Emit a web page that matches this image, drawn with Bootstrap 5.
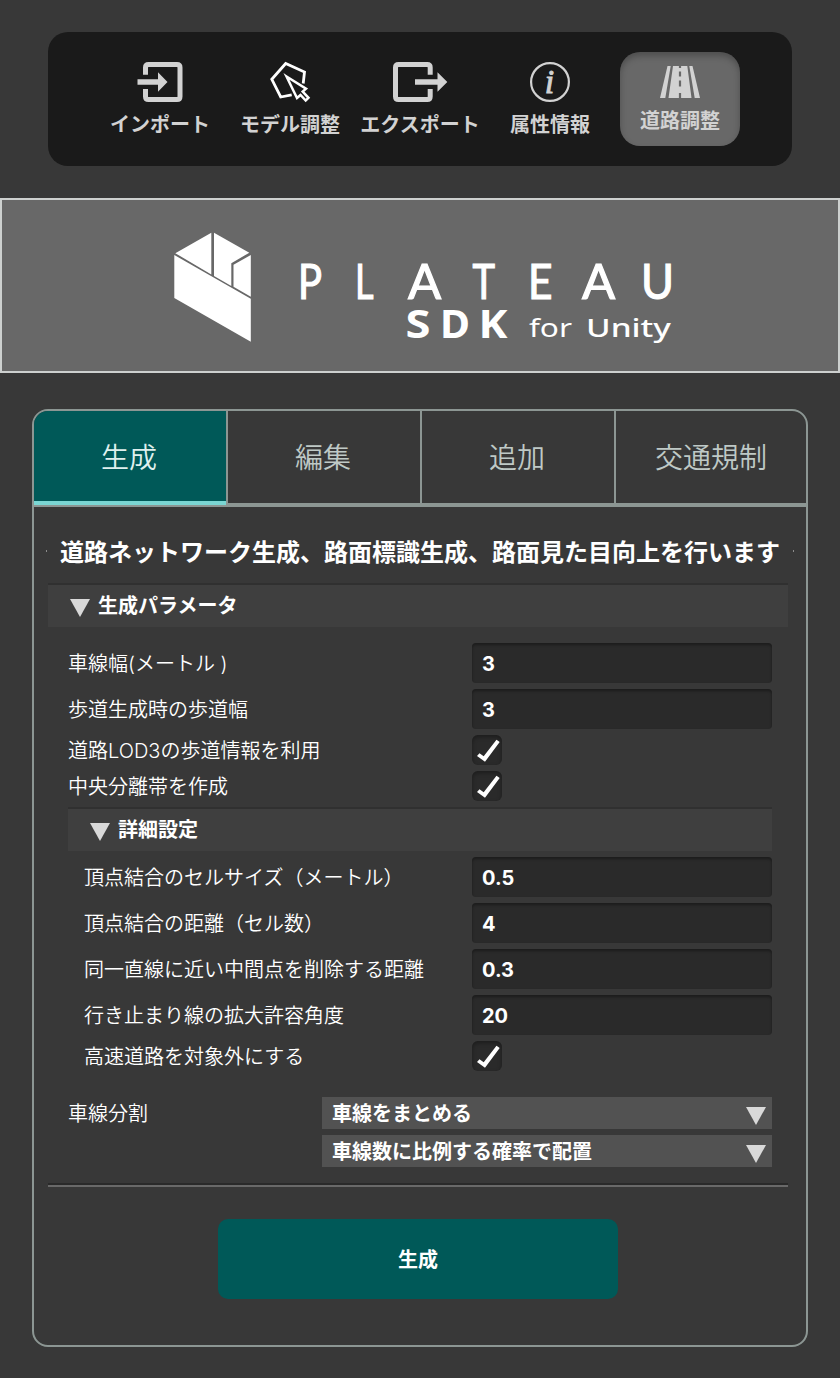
<!DOCTYPE html>
<html lang="ja">
<head>
<meta charset="utf-8">
<meta name="viewport" content="width=device-width, initial-scale=1">
<title>PLATEAU SDK for Unity</title>
<link rel="stylesheet" href="https://cdn.jsdelivr.net/npm/bootstrap@5.3.0/dist/css/bootstrap.min.css">
<style>
body{background:#383838;color:#fff;font-family:Inter,"Noto Sans CJK JP",sans-serif;font-size:20px;line-height:24px}
.jp{font-family:"Noto Sans CJK JP",sans-serif}
.toolbar{margin:32px 48px 0;height:134px;padding:20px 52px;gap:10px;background:#1a1a1a;border-radius:20px}
.tool{width:120px;height:94px;padding:10px 0 0;gap:10px;color:#d2d2d2;font-weight:700;border-radius:20px;white-space:nowrap;border:0;background:none}
.tool.active{background:#686868;box-shadow:inset 0 4px 6px rgba(0,0,0,.25);padding-top:14px}
.tool svg{display:block;overflow:visible}
.banner{margin-top:32px;height:175px;border:2px solid #cdd0cf;background:#686868}
.banner svg{display:block;margin:-2px}
.panel{margin:36px 32px 31px;height:938px;border:2px solid #8c9693;border-radius:16px;overflow:hidden}
.tabs{height:96px;border-bottom:2px solid #8c9693}
.tab{width:194px;border:0;border-right:2px solid #8c9693;border-bottom:2px solid #8c9693;background:none;color:#bfc9c6;font-size:28px;font-weight:350;padding:0 2px 3px 0}
.tab:last-child{width:190px;border-right:0;padding-right:0}
.tab.active{background:linear-gradient(#7ad6d3,#7ad6d3) 0 100%/100% 4px no-repeat #005958;border-bottom:0;color:#dff0ee;padding-bottom:5px}
.title{height:76px;padding:12px 12px 0 12px;font-size:24px;font-weight:700}
.title i{width:1px;height:2px;background:#8c8c8c}
.fold{height:44px;border-top:2px solid #303030;background:#3f3f3f;padding:0 0 0 22px;gap:8px;font-weight:700}
.fold svg{margin-top:4px}
.main-sec{margin:0 18px 0 14px}
.fields{padding:16px 16px 0 20px}
.rows{display:flex;flex-direction:column;gap:6px}
.sub{padding-left:16px}
.frow{display:flex;align-items:center;justify-content:space-between}
.cap{padding-top:2px;font-weight:350}
.split-cap{margin-top:3px}
.val{width:300px;height:40px;border:0;border-radius:4px;background:#2a2a2a;box-shadow:inset 0 2px 3px rgba(0,0,0,.35);color:#fff;font-size:20px;font-weight:700;padding:2px 10px 0}
.val:focus{background:#2a2a2a;color:#fff}
.tick{width:30px;height:30px;margin-right:270px;border-radius:6px;background:#2a2a2a;box-shadow:inset 0 2px 4px rgba(0,0,0,.35)}
.tick svg{display:block}
.pick{width:450px;height:32px;background:#525252;border:0;color:#fff;font-weight:700;padding:2px 5px 0 10px}
.pick svg{margin-top:4px}
.rule{margin:16px 18px 0 14px;height:4px;background:#696969;border-top:2px solid #2a2a2a}
.go{width:400px;height:80px;margin:32px 0 0 184px;padding:8px 0 6px;border:0;border-radius:10px;background:#005958;color:#fff;font-size:20px;font-weight:700}
.go:hover{background:#005958;color:#fff}
</style>
</head>
<body>
<svg width="0" height="0" class="position-absolute">
<symbol id="tri" viewBox="0 0 20 18"><path d="M0 0H20L10 18Z" fill="#d9d9d9"/></symbol>
<symbol id="chk" viewBox="0 0 30 30"><path d="M5 21L7.500 18.200L11.700 21.200L24.500 4.800L27.700 7L13 26.800Z" fill="#fff"/></symbol>
</svg>

<nav class="toolbar d-flex jp">
 <button class="tool d-flex flex-column align-items-center">
  <svg width="46" height="40" fill="none"><path d="M8.500 12.700V5.500Q8.500 2.500 11.500 2.500H40Q43 2.500 43 5.500V34.500Q43 37.500 40 37.500H11.500Q8.500 37.500 8.500 34.500V27" stroke="#d2d2d2" stroke-width="5"/><path d="M.5 17.300H21V10.300L30.500 20L21 29.700V22.700H.5Z" fill="#d2d2d2"/></svg>
  <span>インポート</span></button>
 <button class="tool d-flex flex-column align-items-center">
  <svg width="40" height="40" fill="none" stroke="#fff" stroke-width="2.800"><path d="M33.200 21.500L34.500 10L15.700 1.500L1.800 17.300L10.700 35L21.700 32.800"/><path d="M16.500 14.500L36 26.700L32.700 29.500L38.500 35.800L35.700 38.500L30.500 33L27 36Z" stroke-width="2.500"/></svg>
  <span>モデル調整</span></button>
 <button class="tool d-flex flex-column align-items-center">
  <svg width="54" height="40" fill="none"><path d="M37.200 12.700V5.500Q37.200 2.500 34.200 2.500H5.500Q2.500 2.500 2.500 5.500V34.500Q2.500 37.500 5.500 37.500H34.200Q37.200 37.500 37.200 34.500V27" stroke="#d2d2d2" stroke-width="5"/><path d="M22 17.300H44.500V10.300L54.300 20L44.500 29.700V22.700H22Z" fill="#d2d2d2"/></svg>
  <span>エクスポート</span></button>
 <button class="tool d-flex flex-column align-items-center">
  <svg width="40" height="40" fill="#d2d2d2"><circle cx="20" cy="20" r="18.900" fill="none" stroke="#d2d2d2" stroke-width="2.200"/><text x="19.500" y="31" text-anchor="middle" font-family="Liberation Serif,serif" font-style="italic" font-weight="400" font-size="34" stroke="#d2d2d2" stroke-width=".9">i</text></svg>
  <span>属性情報</span></button>
 <button class="tool active d-flex flex-column align-items-center">
  <svg width="40" height="32" fill="#d2d2d2"><path d="M7.500 0H10.700L5.300 32H0ZM29.300 0H32.500L40 32H34.700ZM13 0H27.300L31.500 32H8.500Z"/><path d="M20 0V2M20 5.500V10.500M20 14.500V20.500M20 27V32" stroke="#686868" stroke-width="2.200"/></svg>
  <span>道路調整</span></button>
</nav>

<header class="banner">
 <svg width="840" height="175" viewBox="0 198 840 175" fill="#fff">
  <path d="M175.300 253.200L211.300 232.700V274.500ZM214 232.700L249.300 252.700L231.300 263.300V286L214 276ZM233.500 264.700L250.800 255V296.700L233.500 286.800ZM174.300 255L250.800 298.700V341.700L174.300 298Z"/>
  <g font-family="Lato,sans-serif" font-size="49" stroke="#fff" stroke-width="1.200">
   <text y="299" x="298" textLength="24" lengthAdjust="spacingAndGlyphs">P</text>
   <text y="299" x="355" textLength="18.500" lengthAdjust="spacingAndGlyphs">L</text>
   <text y="299" x="408">A</text>
   <text y="299" x="472.500" textLength="22.500" lengthAdjust="spacingAndGlyphs">T</text>
   <text y="299" x="528" textLength="24.500" lengthAdjust="spacingAndGlyphs">E</text>
   <text y="299" x="582">A</text>
   <text y="299" x="641" textLength="33" lengthAdjust="spacingAndGlyphs">U</text>
  </g>
  <g font-family="Noto Sans,sans-serif" font-weight="700" font-size="39">
   <text y="338" x="405.500" textLength="25" lengthAdjust="spacingAndGlyphs">S</text>
   <text y="338" x="440" textLength="30" lengthAdjust="spacingAndGlyphs">D</text>
   <text y="338" x="478.500" textLength="29" lengthAdjust="spacingAndGlyphs">K</text>
  </g>
  <text font-family="Noto Sans,sans-serif" font-size="25.500" y="337" x="529" textLength="43" lengthAdjust="spacingAndGlyphs">for</text>
  <text font-family="Noto Sans,sans-serif" font-weight="500" font-size="25.500" y="337" x="586" textLength="85" lengthAdjust="spacingAndGlyphs">Unity</text>
 </svg>
</header>

<main class="panel">
 <div class="tabs d-flex jp">
  <button class="tab active">生成</button><button class="tab">編集</button><button class="tab">追加</button><button class="tab">交通規制</button>
 </div>
 <div class="title d-flex align-items-center justify-content-between jp"><i></i><span>道路ネットワーク生成、路面標識生成、路面見た目向上を行います</span><i></i></div>
 <section class="main-sec">
  <div class="fold d-flex align-items-center"><svg width="20" height="18"><use href="#tri"/></svg>生成パラメータ</div>
  <div class="fields rows">
   <label class="frow"><span class="cap">車線幅(メートル )</span><input class="form-control val" value="3"></label>
   <label class="frow"><span class="cap">歩道生成時の歩道幅</span><input class="form-control val" value="3"></label>
   <div class="frow"><span class="cap">道路LOD3の歩道情報を利用</span><span class="tick"><svg width="30" height="30"><use href="#chk"/></svg></span></div>
   <div class="frow"><span class="cap">中央分離帯を作成</span><span class="tick"><svg width="30" height="30"><use href="#chk"/></svg></span></div>
   <div class="fold d-flex align-items-center"><svg width="20" height="18"><use href="#tri"/></svg>詳細設定</div>
   <div class="sub rows">
    <label class="frow"><span class="cap">頂点結合のセルサイズ（メートル）</span><input class="form-control val" value="0.5"></label>
    <label class="frow"><span class="cap">頂点結合の距離（セル数）</span><input class="form-control val" value="4"></label>
    <label class="frow"><span class="cap">同一直線に近い中間点を削除する距離</span><input class="form-control val" value="0.3"></label>
    <label class="frow"><span class="cap">行き止まり線の拡大許容角度</span><input class="form-control val" value="20"></label>
    <div class="frow"><span class="cap">高速道路を対象外にする</span><span class="tick"><svg width="30" height="30"><use href="#chk"/></svg></span></div>
   </div>
   <div class="d-flex justify-content-between align-items-start mt-3 pt-1">
    <span class="cap split-cap">車線分割</span>
    <div class="rows">
     <button class="pick d-flex align-items-center justify-content-between">車線をまとめる<svg width="22" height="18"><use href="#tri"/></svg></button>
     <button class="pick d-flex align-items-center justify-content-between">車線数に比例する確率で配置<svg width="22" height="18"><use href="#tri"/></svg></button>
    </div>
   </div>
  </div>
 </section>
 <div class="rule"></div>
 <button class="btn go">生成</button>
</main>
<script src="https://cdn.jsdelivr.net/npm/bootstrap@5.3.0/dist/js/bootstrap.bundle.min.js"></script>
</body>
</html>
